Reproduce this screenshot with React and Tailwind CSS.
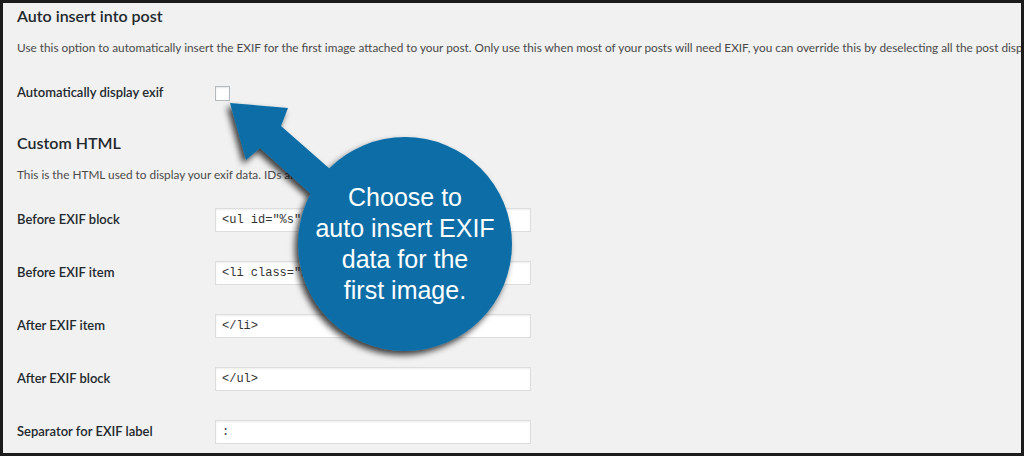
import React from 'react';

const rows = [
    { label: 'Before EXIF block', value: '<ul id="%s">' },
    { label: 'Before EXIF item', value: '<li class="%s">' },
    { label: 'After EXIF item', value: '</li>' },
    { label: 'After EXIF block', value: '</ul>' },
    { label: 'Separator for EXIF label', value: ':' },
];

const Callout = () => (
    <>
        <svg className="absolute left-0 top-0" width="1024" height="456" viewBox="0 0 1024 456">
            <defs>
                <filter id="shadow" x="-20%" y="-20%" width="140%" height="140%">
                    <feDropShadow dx="-3" dy="4" stdDeviation="3" floodColor="#000" floodOpacity="0.75" />
                </filter>
            </defs>
            <g filter="url(#shadow)" fill="#0b6ea7">
                <polygon points="227,100 285,105 278,123 360,195 340,220 257,145 243,157" />
                <circle cx="402" cy="241" r="107" />
            </g>
        </svg>
        {/* callout text */}
        <div className="absolute left-[295px] top-[134px] w-[214px] h-[214px] flex items-center justify-center text-center text-white font-['Liberation_Sans',Arial,sans-serif] text-[25px] leading-[31px]">
            <p>Choose to<br />auto insert EXIF<br />data for the<br />first image.</p>
        </div>
    </>
);

export default function App() {
    return (
        <div className="relative w-[1024px] h-[456px] overflow-hidden border-[3px] border-[#1c1c1c] bg-[#f1f1f1] font-['Lato',sans-serif] text-[#23282d]">
            <div className="pl-[14px] pt-[3px]">
                <h2 className="h-[20px] text-[16px] leading-[20px] font-semibold">Auto insert into post</h2>
                <p className="mt-[12px] h-[20px] overflow-hidden text-[11.8px] leading-[20px] text-[#4a4a4a] whitespace-nowrap">
                    Use this option to automatically insert the EXIF for the first image attached to your post. Only use this when most of your posts will need EXIF, you can override this by deselecting all the post display options.
                </p>
                <div className="mt-[25px] flex h-[20px] items-center">
                    <span className="w-[198px] text-[13px] font-semibold">Automatically display exif</span>
                    <span className="h-[15px] w-[15px] border border-[#b4b9be] bg-white shadow-[inset_0_1px_2px_rgba(0,0,0,0.1)]"></span>
                </div>
                <h2 className="mt-[30px] h-[20px] text-[16px] leading-[20px] font-semibold">Custom HTML</h2>
                <p className="mt-[12px] h-[20px] text-[11.8px] leading-[20px] text-[#4a4a4a] whitespace-nowrap">
                    This is the HTML used to display your exif data. IDs are allowed.
                </p>
                <div className="mt-[23px] flex flex-col gap-[29px]">
                    {rows.map((row) => (
                        <div key={row.label} className="flex h-[24px] items-center">
                            <span className="w-[198px] text-[13px] font-semibold">{row.label}</span>
                            <div className="flex h-[24px] w-[316px] items-center border border-[#ddd] bg-white px-[6px] shadow-[inset_0_1px_2px_rgba(0,0,0,0.07)] font-['Liberation_Mono',monospace] text-[12px] text-[#333]">
                                {row.value}
                            </div>
                        </div>
                    ))}
                </div>
            </div>
            <Callout />
        </div>
    );
}
